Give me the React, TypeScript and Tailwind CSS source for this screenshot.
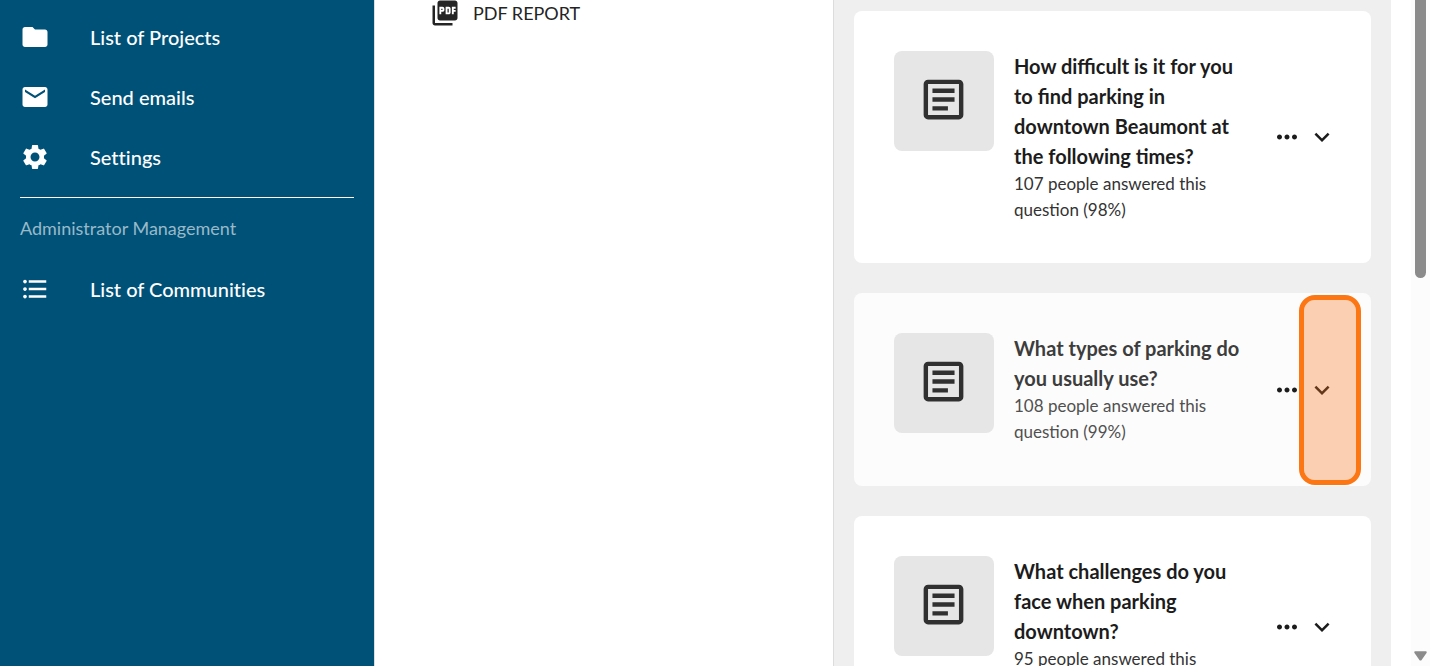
import type { IconType } from "react-icons";
import {
  MdEmail,
  MdExpandMore,
  MdFolder,
  MdFormatListBulleted,
  MdMoreHoriz,
  MdOutlineArticle,
  MdPictureAsPdf,
  MdSettings,
} from "react-icons/md";

type Question = {
  title: string;
  summary: string;
  active?: boolean;
};

const questions: Question[] = [
  {
    title: "How difficult is it for you to find parking in downtown Beaumont at the following times?",
    summary: "107 people answered this question (98%)",
  },
  {
    title: "What types of parking do you usually use?",
    summary: "108 people answered this question (99%)",
    active: true,
  },
  {
    title: "What challenges do you face when parking downtown?",
    summary: "95 people answered this question (87%)",
  },
];

function NavItem({ icon: Icon, label }: { icon: IconType; label: string }) {
  return (
    <li>
      <a href="#" className="flex h-[60px] items-center gap-10 text-xl font-medium text-white">
        <Icon className="size-[30px] shrink-0" aria-hidden />
        <span>{label}</span>
      </a>
    </li>
  );
}

function Sidebar() {
  return (
    <nav className="w-[375px] shrink-0 border-r border-[#dedede] bg-[#005177] px-5 pt-[7px] [font-variant-ligatures:none]">
      <ul>
        <NavItem icon={MdFolder} label="List of Projects" />
        <NavItem icon={MdEmail} label="Send emails" />
        <NavItem icon={MdSettings} label="Settings" />
      </ul>
      <hr className="mt-2.5 border-white" />
      <h2 className="mt-4 text-lg text-[#99b9c9]">Administrator Management</h2>
      <ul className="mt-[17px]">
        <NavItem icon={MdFormatListBulleted} label="List of Communities" />
      </ul>
    </nav>
  );
}

function QuestionCard({ title, summary, active }: Question) {
  return (
    <article
      className={`relative flex min-h-[193px] shrink-0 rounded-lg py-10 pr-[34px] pl-10 ${active ? "bg-[#fcfcfc]" : "bg-white"}`}
    >
      <div className="flex size-[100px] shrink-0 items-center justify-center rounded-lg bg-[#e6e6e6] pr-px pb-[3px]">
        <MdOutlineArticle className="size-[53px] text-[#2f302f]" aria-hidden />
      </div>
      <div className="mx-5 min-w-0 flex-1">
        <h3 className={`text-xl leading-[30px] font-bold ${active ? "text-[#3d3d3d]" : "text-[#1c1c1c]"}`}>
          {title}
        </h3>
        <p className={`text-[17px] leading-[26px] ${active ? "text-[#505050]" : "text-[#333333]"}`}>{summary}</p>
      </div>
      <div className="flex items-center gap-[5px] text-[#1c1c1c]">
        <button type="button" aria-label="More options">
          <MdMoreHoriz className="size-[30px]" />
        </button>
        <button type="button" aria-label="Expand question">
          <MdExpandMore className="size-[30px]" />
        </button>
      </div>
      {active && (
        <div className="pointer-events-none absolute top-0.5 right-2.5 bottom-px w-[62px] rounded-2xl border-[5px] border-[#fd7614] bg-[#f97316]/32 bg-clip-padding" />
      )}
    </article>
  );
}

function Scrollbar() {
  return (
    <div className="flex w-[19px] shrink-0 flex-col items-center justify-between bg-[#fcfcfc] pb-[5px]" aria-hidden>
      <div className="h-[278px] w-[11px] rounded-b-full bg-[#8b8b8b]" />
      <svg viewBox="0 0 13 10" className="h-2.5 w-[13px] fill-[#8b8b8b]">
        <path d="M1.4 0.2h10.2c1 0 1.5 1 0.9 1.8L7.6 9c-.5.8-1.7.8-2.2 0L.5 2C-.1 1.2.4.2 1.4.2z" />
      </svg>
    </div>
  );
}

export default function App() {
  return (
    <div className="flex h-screen overflow-hidden bg-white font-[Lato,sans-serif]">
      <Sidebar />
      <main className="flex min-w-0 flex-1">
        <section className="min-w-0 flex-1 pl-[55px]">
          <a href="#" className="flex h-[26px] items-center gap-[13px] text-lg text-[#242424]">
            <MdPictureAsPdf className="size-[30px] shrink-0" aria-hidden />
            PDF REPORT
          </a>
        </section>
        <section className="mr-5 flex w-[558px] shrink-0 flex-col gap-[30px] border-l border-[#dcdcdc] bg-[#efefef] px-5 pt-[11px]">
          {questions.map((question) => (
            <QuestionCard key={question.title} {...question} />
          ))}
        </section>
      </main>
      <Scrollbar />
    </div>
  );
}
